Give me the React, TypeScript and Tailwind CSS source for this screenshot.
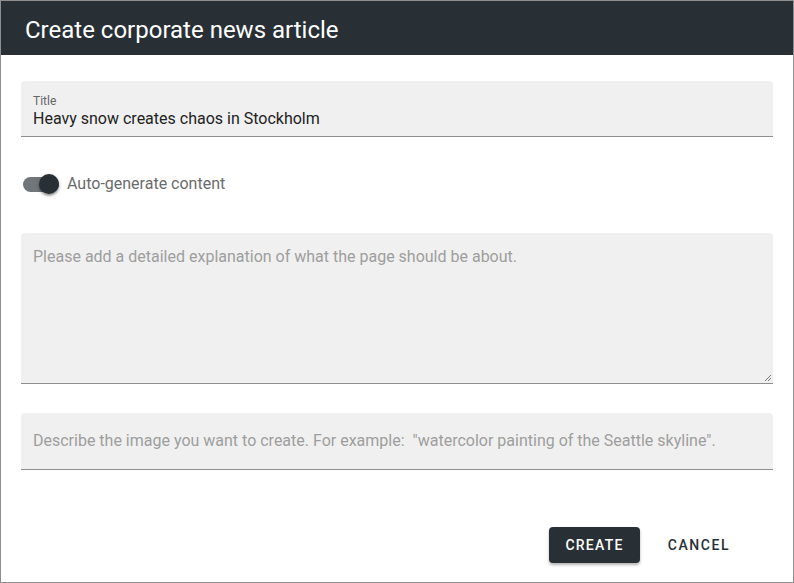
import React from "react";

const font = { fontFamily: "Roboto, 'Liberation Sans', sans-serif" };

function Switch() {
  return (
    <div className="relative h-[20px] w-[40px] shrink-0">
      <div className="absolute left-[1px] top-[3px] h-[15px] w-[36px] rounded-full bg-[#70767a]" />
      <div className="absolute left-[17px] top-0 h-[20px] w-[20px] rounded-full bg-[#283036] shadow-[0_2px_2px_rgba(0,0,0,0.3),0_1px_4px_rgba(0,0,0,0.2)]" />
    </div>
  );
}

export default function App() {
  return (
    <div
      className="flex h-[583px] w-[794px] flex-col border border-[#8e8e8e] bg-white"
      style={font}
    >
      <div className="flex h-[54px] shrink-0 items-center bg-[#283036] px-[24px] pt-[3px]">
        <h1 className="text-[24px] font-normal text-white">Create corporate news article</h1>
      </div>

      <div className="flex flex-1 flex-col px-[20px] pt-[26px]">
        <div className="flex h-[56px] flex-col justify-center rounded-t-[4px] border-b border-[#8f8f8f] bg-[#f0f0f0] px-[12px] pt-[6px]">
          <span className="text-[12px] leading-[14px] text-[#666]">Title</span>
          <span className="text-[16px] leading-[22px] text-[#222]">
            Heavy snow creates chaos in Stockholm
          </span>
        </div>

        <div className="mt-[35px] flex items-center gap-[5px] pl-[1px]">
          <Switch />
          <span className="text-[16px] text-[#6b6b6b]">Auto-generate content</span>
        </div>

        <div className="relative mt-[37px] h-[151px] rounded-t-[4px] border-b border-[#8f8f8f] bg-[#f0f0f0] px-[12px] pt-[12px]">
          <span className="text-[16px] text-[#9e9e9e]">
            Please add a detailed explanation of what the page should be about.
          </span>
          <svg className="absolute bottom-[1px] right-[1px]" width="8" height="8" viewBox="0 0 8 8">
            <path d="M7 1 L1 7 M7 4 L4 7" stroke="#777" strokeWidth="1" />
          </svg>
        </div>

        <div className="mt-[29px] flex h-[57px] items-center rounded-t-[4px] border-b border-[#8f8f8f] bg-[#f0f0f0] px-[12px]">
          <span className="whitespace-pre text-[16px] text-[#9e9e9e]">
            {'Describe the image you want to create. For example:  "watercolor painting of the Seattle skyline".'}
          </span>
        </div>

        <div className="mt-[57px] flex items-center justify-end gap-[14px] pr-[29px]">
          <button className="h-[36px] w-[91px] rounded-[4px] bg-[#283036] text-[14px] font-medium tracking-[1.25px] text-white shadow-[0_2px_3px_rgba(0,0,0,0.3)]">
            CREATE
          </button>
          <button className="h-[36px] w-[90px] text-[14px] font-medium tracking-[1.6px] text-[#283036]">
            CANCEL
          </button>
        </div>
      </div>
    </div>
  );
}
